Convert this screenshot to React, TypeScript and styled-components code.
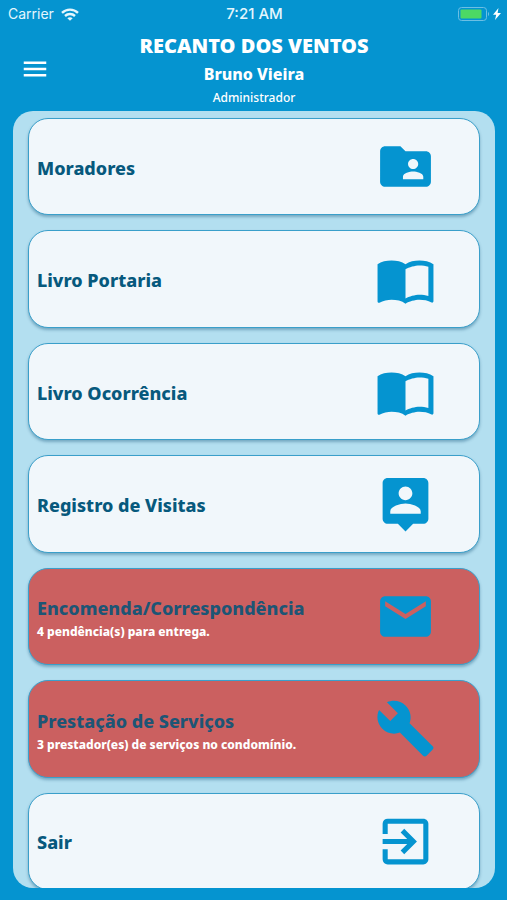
import React from "react";
import styled, { createGlobalStyle } from "styled-components";
import {
  MdBuild,
  MdEmail,
  MdExitToApp,
  MdFolderShared,
  MdImportContacts,
  MdMenu,
} from "react-icons/md";

const GlobalStyle = createGlobalStyle`
  *, *::before, *::after { box-sizing: border-box; }
  body { margin: 0; background: #0594d0; }
`;

const Screen = styled.div`
  display: flex;
  flex-direction: column;
  height: 100vh;
  padding: 0 12px 12px 13px;
  background: #0594d0;
  color: #fff;
  font-family: "Noto Sans", "Open Sans", sans-serif;
`;

const StatusBar = styled.div`
  display: grid;
  grid-template-columns: 1fr auto 1fr;
  align-items: center;
  flex: none;
  height: 28px;
  margin: 0 -6px 0 -5px;
  font: 400 14px/20px Inter, sans-serif;
  color: #e4f6fd;
`;

const StatusGroup = styled.div<{ $end?: boolean }>`
  display: flex;
  align-items: center;
  justify-content: ${(p) => (p.$end ? "flex-end" : "flex-start")};
  gap: ${(p) => (p.$end ? "3px" : "7px")};
`;

const Clock = styled.time`
  font-size: 15px;
  font-weight: 500;
`;

const Header = styled.header`
  display: grid;
  grid-template-columns: 44px 1fr 44px;
  align-items: center;
  flex: none;
  height: 83px;
`;

const MenuButton = styled.button`
  display: flex;
  align-items: center;
  justify-content: center;
  width: 44px;
  height: 42px;
  margin-bottom: 2px;
  padding: 0;
  border: 0;
  background: none;
  color: inherit;
  cursor: pointer;
`;

const Titles = styled.div`
  display: flex;
  flex-direction: column;
  align-items: center;
  text-align: center;
`;

const Condo = styled.h1`
  margin: 0;
  font-size: 20px;
  font-weight: 900;
  line-height: 28px;
`;

const UserName = styled.p`
  margin: 0;
  font-size: 16px;
  font-weight: 800;
  line-height: 28px;
`;

const Role = styled.p`
  margin: 0;
  font-size: 12px;
  font-weight: 500;
  line-height: 20px;
`;

const Panel = styled.main`
  flex: 1;
  min-height: 0;
  overflow-y: auto;
  scrollbar-width: none;
  border-radius: 20px;
  background: #b3dff0;
`;

const CardList = styled.ul`
  display: grid;
  grid-auto-rows: minmax(97px, 1fr);
  gap: 15px;
  min-height: calc(100% + 2px);
  margin: 0;
  padding: 7px 15px 0;
  list-style: none;
`;

const Card = styled.button<{ $alert: boolean }>`
  display: flex;
  align-items: center;
  justify-content: space-between;
  width: 100%;
  height: 100%;
  padding: 0 43px 0 8px;
  border: 1px solid #3a9fca;
  border-radius: 20px;
  background: ${(p) => (p.$alert ? "#cb6060" : "#f1f7fb")};
  box-shadow: 0 2px 3px rgba(0, 70, 110, 0.35);
  color: #0594d0;
  font-family: inherit;
  text-align: left;
  cursor: pointer;
`;

const CardText = styled.span<{ $alert: boolean }>`
  display: flex;
  flex-direction: column;
  padding-top: ${(p) => (p.$alert ? "6px" : "2px")};
`;

const CardTitle = styled.span<{ $alert: boolean }>`
  color: ${(p) => (p.$alert ? "#1d5575" : "#07597d")};
  font-size: 18px;
  font-weight: 800;
  line-height: 26px;
`;

const CardNote = styled.span`
  color: #fff;
  font-size: 12px;
  font-weight: 800;
  line-height: 22px;
`;

const PersonPinIcon = ({ size }: { size: number }) => (
  <svg width={size} height={size} viewBox="0 0 24 24" fill="currentColor" aria-hidden="true">
    <path d="M19 2H5c-1.110 0-2 .9-2 2v14c0 1.100.9 2 2 2h4l3 3 3-3h4c1.100 0 2-.9 2-2V4c0-1.100-.9-2-2-2zm-7 3.300c1.490 0 2.700 1.210 2.700 2.700s-1.210 2.700-2.700 2.700S9.300 9.490 9.300 8s1.210-2.700 2.700-2.700zM18 16H6v-.9c0-2 4-3.100 6-3.100s6 1.100 6 3.100v.9z" />
  </svg>
);

type Item = {
  title: string;
  note?: string;
  Icon: React.ComponentType<{ size: number }>;
};

const items: Item[] = [
  { title: "Moradores", Icon: MdFolderShared },
  { title: "Livro Portaria", Icon: MdImportContacts },
  { title: "Livro Ocorrência", Icon: MdImportContacts },
  { title: "Registro de Visitas", Icon: PersonPinIcon },
  { title: "Encomenda/Correspondência", note: "4 pendência(s) para entrega.", Icon: MdEmail },
  { title: "Prestação de Serviços", note: "3 prestador(es) de serviços no condomínio.", Icon: MdBuild },
  { title: "Sair", Icon: MdExitToApp },
];

const WifiIcon = () => (
  <svg width="18" height="13" viewBox="0 0 18 13" fill="none" stroke="currentColor" strokeWidth="2.4" aria-hidden="true">
    <path d="M1 4.800C5.500.5 12.500.5 17 4.800" />
    <path d="M4 8c2.800-2.600 7.200-2.600 10 0" />
    <path d="M6.300 10.200c1.600-1.300 3.800-1.300 5.400 0L9 12.800z" fill="currentColor" stroke="none" />
  </svg>
);

const BatteryIcon = () => (
  <svg width="32" height="14" viewBox="0 0 32 14" aria-hidden="true">
    <rect x="0.500" y="0.500" width="28" height="13" rx="3" fill="none" stroke="#6cbfe4" />
    <rect x="2.500" y="2.500" width="21" height="9" rx="1" fill="#4cd964" />
    <path d="M30 5c1.500.5 1.500 3.500 0 4z" fill="#6cbfe4" />
  </svg>
);

const BoltIcon = () => (
  <svg width="8" height="12" viewBox="0 0 8 12" fill="#fff" aria-hidden="true">
    <path d="M5.500 0 0 6.800h3.200L2 12l6-7H4.600z" />
  </svg>
);

export default function App() {
  return (
    <Screen>
      <GlobalStyle />
      <StatusBar>
        <StatusGroup>
          Carrier
          <WifiIcon />
        </StatusGroup>
        <Clock>7:21 AM</Clock>
        <StatusGroup $end>
          <BatteryIcon />
          <BoltIcon />
        </StatusGroup>
      </StatusBar>
      <Header>
        <MenuButton type="button" aria-label="Menu">
          <MdMenu size={30} />
        </MenuButton>
        <Titles>
          <Condo>RECANTO DOS VENTOS</Condo>
          <UserName>Bruno Vieira</UserName>
          <Role>Administrador</Role>
        </Titles>
      </Header>
      <Panel>
        <CardList>
          {items.map(({ title, note, Icon }) => (
            <li key={title}>
              <Card type="button" $alert={Boolean(note)}>
                <CardText $alert={Boolean(note)}>
                  <CardTitle $alert={Boolean(note)}>{title}</CardTitle>
                  {note && <CardNote>{note}</CardNote>}
                </CardText>
                <Icon size={61} />
              </Card>
            </li>
          ))}
        </CardList>
      </Panel>
    </Screen>
  );
}
